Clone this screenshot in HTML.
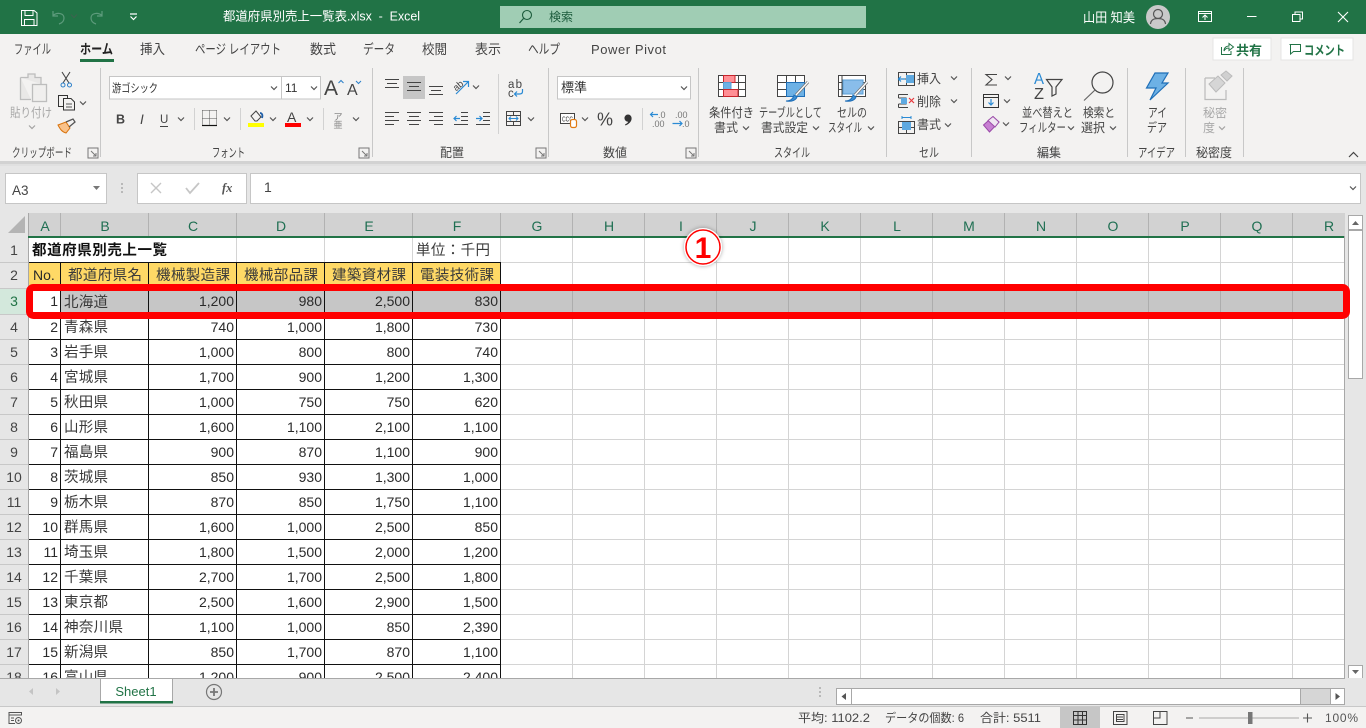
<!DOCTYPE html>
<html lang="ja"><head><meta charset="utf-8"><title>Excel</title>
<style>
html,body{margin:0;padding:0;background:#f3f2f1;overflow:hidden}
svg{display:block;font-family:"Liberation Sans","Noto Sans CJK JP",sans-serif}
.t{font-size:12.5px;fill:#444}
.c{font-size:14px;fill:#2a2a2a}
.j{font-size:14.5px;fill:#3a3a3a}
.n{text-anchor:end}
.h{font-size:14px;fill:#1f6f52;text-anchor:middle}
.r{font-size:14px;fill:#444;text-anchor:middle}
</style></head><body>
<svg xmlns="http://www.w3.org/2000/svg" width="1366" height="728" viewBox="0 0 1366 728">
<defs>
<path id="ch" d="M-3 -1.5L0 1.5L3 -1.5" fill="none" stroke="#555" stroke-width="1.2"/>
<path id="dl" d="M-5 -5H5V5H-5ZM-2 -2L3 3M3 0V3H0" fill="none" stroke="#777" stroke-width="1"/>
<filter id="gl" x="-30%" y="-30%" width="160%" height="160%"><feDropShadow dx="0" dy="0" stdDeviation="2" flood-color="#000" flood-opacity=".35"/></filter>
</defs>
<rect width="1366" height="728" fill="#f3f2f1"/>
<!-- title bar -->
<rect width="1366" height="34" fill="#217346"/>
<path d="M21.5 10.5H34L37 13V25.5H21.5ZM25 10.5V15.5H33V10.5M24.5 25.5V19.5H34V25.5" fill="none" stroke="#fff"/>
<path d="M53 11V16H58M53 15.5C57 12 64 13 64 18C64 21 62 23 59 24" fill="none" stroke="#5d9b7c" stroke-width="1.2"/>
<use href="#ch" x="74" y="16" style="opacity:.5"/>
<path d="M102 11V16H97M102 15.5C98 12 91 13 91 18C91 21 93 23 96 24" fill="none" stroke="#5d9b7c" stroke-width="1.2"/>
<path d="M130 14H137M130.5 16.5L133.5 19.5L136.5 16.5" fill="none" stroke="#fff" stroke-width="1.2"/>
<text x="223" y="20.5" font-size="12.5" fill="#fff" textLength="197" lengthAdjust="spacingAndGlyphs">都道府県別売上一覧表.xlsx&#160;&#160;-&#160;&#160;Excel</text>
<rect x="500" y="6" width="366" height="22" fill="#a0cdb4"/>
<circle cx="527" cy="15" r="4.5" fill="none" stroke="#1d5c3d" stroke-width="1.1"/><path d="M523.5 18.5L519.5 23" stroke="#1d5c3d" stroke-width="1.2"/>
<text x="549" y="21" font-size="12" fill="#1d5c3d">検索</text>
<text x="1083" y="22" font-size="13" fill="#fff" textLength="52" lengthAdjust="spacingAndGlyphs">山田 知美</text>
<circle cx="1158" cy="17" r="12" fill="#c9c9c9"/><circle cx="1158" cy="14" r="4.5" fill="none" stroke="#555" stroke-width="1.2"/><path d="M1150.5 24C1151 19.5 1154 18.5 1158 18.5S1165 19.5 1165.5 24" fill="none" stroke="#555" stroke-width="1.2"/>
<path d="M1198.5 11.5H1211.5V21.5H1198.5ZM1198.5 13.5H1211.5M1205 20V15.5M1202.5 17.5L1205 15L1207.5 17.5" fill="none" stroke="#fff"/>
<path d="M1247 16.5H1256.5" stroke="#fff"/>
<path d="M1292.5 14.5H1300V21.5H1292.5ZM1295 14.5V12H1302.5V19H1300" fill="none" stroke="#fff"/>
<path d="M1338 12L1348 22M1348 12L1338 22" stroke="#fff" stroke-width="1.1"/>
<!-- tabs -->
<g font-size="13.5" fill="#444">
<text x="14" y="54" textLength="37" lengthAdjust="spacingAndGlyphs">ファイル</text>
<text x="80" y="54" font-weight="700" fill="#222" textLength="33" lengthAdjust="spacingAndGlyphs">ホーム</text>
<text x="140" y="54" textLength="25" lengthAdjust="spacingAndGlyphs">挿入</text>
<text x="195" y="54" textLength="86" lengthAdjust="spacingAndGlyphs">ページ レイアウト</text>
<text x="310" y="54" textLength="26" lengthAdjust="spacingAndGlyphs">数式</text>
<text x="363" y="54" textLength="32" lengthAdjust="spacingAndGlyphs">データ</text>
<text x="422" y="54" textLength="25" lengthAdjust="spacingAndGlyphs">校閲</text>
<text x="475" y="54" textLength="26" lengthAdjust="spacingAndGlyphs">表示</text>
<text x="528" y="54" textLength="32" lengthAdjust="spacingAndGlyphs">ヘルプ</text>
<text x="591" y="54" font-size="13" textLength="75">Power Pivot</text>
</g>
<rect x="80" y="59" width="34" height="3" fill="#217346"/>
<rect x="1213" y="38" width="58" height="22" fill="#fff" stroke="#e4e4e4"/>
<path d="M1221.500 47V54.500H1231V51M1224 51C1224 47.500 1226.500 46 1229 46V43.500L1233.500 47L1229 50.500V48C1227 48 1225 49 1224 51Z" fill="none" stroke="#217346"/>
<text x="1236" y="55" font-size="13" font-weight="700" fill="#217346">共有</text>
<rect x="1281" y="38" width="72" height="22" fill="#fff" stroke="#e4e4e4"/>
<path d="M1289.5 44.5H1300.5V51.5H1293.5L1290.5 54V44.5Z" fill="none" stroke="#217346"/>
<text x="1304" y="55" font-size="13" font-weight="700" fill="#217346" textLength="41" lengthAdjust="spacingAndGlyphs">コメント</text>
<!-- ribbon shadow and formula area -->
<rect y="161" width="1366" height="517" fill="#e6e6e6"/>
<rect y="161" width="1366" height="3" fill="#d2d2d2"/>
<rect y="164" width="1366" height="2" fill="#e0e0e0"/>
<!-- separators -->
<g stroke="#c8c8c8"><path d="M100.5 68V157M372.5 68V157M548.5 68V157M698.5 68V157M886.5 68V157M971.5 68V157M1127.5 68V157M1185.5 68V157M1243.5 68V157"/></g>
<path d="M194.5 108V130M240.5 108V130M323.5 108V130M498.5 74V134M642.5 108V130" stroke="#d2d2d2"/>
<!-- group labels -->
<g>
<text class="t" x="12" y="157" textLength="60" lengthAdjust="spacingAndGlyphs">クリップボード</text>
<text class="t" x="212" y="157" textLength="33" lengthAdjust="spacingAndGlyphs">フォント</text>
<text class="t" x="440" y="157" textLength="24" lengthAdjust="spacingAndGlyphs">配置</text>
<text class="t" x="603" y="157" textLength="24" lengthAdjust="spacingAndGlyphs">数値</text>
<text class="t" x="774" y="157" textLength="36" lengthAdjust="spacingAndGlyphs">スタイル</text>
<text class="t" x="919" y="157" textLength="20" lengthAdjust="spacingAndGlyphs">セル</text>
<text class="t" x="1037" y="157" textLength="24" lengthAdjust="spacingAndGlyphs">編集</text>
<text class="t" x="1138" y="157" textLength="37" lengthAdjust="spacingAndGlyphs">アイデア</text>
<text class="t" x="1196" y="157" textLength="36" lengthAdjust="spacingAndGlyphs">秘密度</text>
</g>
<use href="#dl" x="93" y="153"/><use href="#dl" x="364" y="153"/><use href="#dl" x="541" y="153"/><use href="#dl" x="691" y="153"/>
<path d="M1349 157L1353.5 152.5L1358 157" fill="none" stroke="#444" stroke-width="1.2"/>
<!-- clipboard -->
<path d="M20.5 77.5H28V74H35V77.5H41V84M20.5 77.5V99.5H31" fill="#e9e8e7" stroke="#bdbdbd" stroke-width="1.3"/>
<rect x="32.5" y="84.5" width="14" height="17" fill="#f0efee" stroke="#bdbdbd" stroke-width="1.3"/>
<text x="10" y="117" font-size="12.5" fill="#a8a8a8" textLength="42" lengthAdjust="spacingAndGlyphs">貼り付け</text>
<use href="#ch" x="32" y="127" style="opacity:.5"/>
<path d="M62 72L69 83M70 72L63 83" stroke="#444" stroke-width="1.1"/><circle cx="63" cy="85" r="2" fill="none" stroke="#2a7fc9"/><circle cx="69.5" cy="85" r="2" fill="none" stroke="#2a7fc9"/>
<path d="M63 106.5H58.5V95.5H67.5V98M63.5 98.5H71L74.5 102V110H63.5Z" fill="#f3f2f1" stroke="#333"/><path d="M66 104H72M66 107H72" stroke="#555"/>
<use href="#ch" x="83" y="103"/>
<path d="M58 125L66 122L70 128L66 133C62 132 60 129 58 125Z" fill="#f9c28a" stroke="#d9730d"/><path d="M66 122L73 119L75 122L69 127" fill="none" stroke="#555" stroke-width="1.3"/>
<!-- font -->
<rect x="109.5" y="76.5" width="172" height="22.5" fill="#fff" stroke="#c6c6c6"/>
<rect x="281.5" y="76.5" width="39" height="22.5" fill="#fff" stroke="#c6c6c6"/>
<text x="112" y="92" font-size="11.5" fill="#333" textLength="46" lengthAdjust="spacingAndGlyphs">游ゴシック</text>
<text x="285" y="92" font-size="12" fill="#333">11</text>
<use href="#ch" x="274" y="88"/><use href="#ch" x="314" y="88"/>
<text x="324" y="95" font-size="21" fill="#444">A</text>
<path d="M338.5 83L341 80.5L343.5 83" fill="none" stroke="#2a7fc9"/>
<text x="347" y="95" font-size="16" fill="#444">A</text>
<path d="M356 81L358.5 83.5L361 81" fill="none" stroke="#2a7fc9"/>
<text x="116" y="123.500" font-size="12.500" font-weight="700" fill="#444">B</text>
<text x="140" y="124" font-size="13.500" font-style="italic" fill="#444">I</text>
<text x="160" y="123" font-size="11.500" fill="#444">U</text><path d="M160 126.500H168" stroke="#444"/>
<use href="#ch" x="181" y="119"/>
<path d="M202.5 110.5H217M202.5 118.5H217M209.5 110.5V125M202.5 110.5V125M216.5 110.5V125" fill="none" stroke="#555" stroke-dasharray="1 1"/><path d="M202 125.5H217" stroke="#111" stroke-width="1.2"/>
<use href="#ch" x="227" y="119"/>
<path d="M251 116L256 111L261 117L257 121H255Z" fill="none" stroke="#444"/><path d="M260 113C262 113 263 115 262 118" fill="none" stroke="#1f5fa8" stroke-width="1.8"/>
<rect x="248" y="123" width="16" height="4" fill="#ff0"/>
<use href="#ch" x="273" y="119"/>
<text x="287" y="122" font-size="14" fill="#444">A</text>
<rect x="285" y="123" width="16" height="4" fill="#f00"/>
<use href="#ch" x="310" y="119"/>
<text x="333.5" y="120" font-size="9" fill="#777">ア</text>
<text x="333.5" y="128" font-size="9" fill="#888">亜</text>
<use href="#ch" x="356" y="119"/>
<!-- alignment -->
<rect x="403" y="76" width="22" height="23" fill="#c6c6c6"/>
<g stroke="#444" fill="none">
<path d="M385 79.5H399M387 83.5H397M385 87.5H399"/>
<path d="M407 82.5H421M409 86.5H419M407 90.5H421"/>
<path d="M429 86.5H443M431 90.5H441M429 94.5H443"/>
<path d="M385 112.5H399M385 116.5H394M385 120.5H399M385 124.5H394"/>
<path d="M407 112.5H421M409 116.5H419M407 120.5H421M409 124.5H419"/>
<path d="M429 112.5H443M434 116.5H443M429 120.5H443M434 124.5H443"/>
<path d="M461 112.5H468M461 116.5H468M461 120.5H468M454 124.5H468"/>
<path d="M483 112.5H490M483 116.5H490M483 120.5H490M476 124.5H490"/>
</g>
<path d="M460 118.5H454M456.5 116L454 118.5L456.5 121" fill="none" stroke="#2a8ad4" stroke-width="1.2"/>
<path d="M476 118.5H482M479.5 116L482 118.5L479.5 121" fill="none" stroke="#2a8ad4" stroke-width="1.2"/>
<text x="453" y="89" font-size="9.5" fill="#444" transform="rotate(-40 458 86)">ab</text>
<path d="M456 94L468 82M463 81.5H468.5V87" fill="none" stroke="#2a8ad4" stroke-width="1.2"/>
<use href="#ch" x="476" y="87"/>
<text x="508" y="88" font-size="11.5" fill="#444" textLength="14">ab</text><text x="508" y="97" font-size="11.5" fill="#444">c</text>
<path d="M522.5 89V91.5C522.5 93 521.5 94 519.5 94H515M517 91.5L514.5 94L517 96.5" fill="none" stroke="#2a8ad4" stroke-width="1.2"/>
<path d="M506.5 111.5H520.5V125.5H506.5ZM506.5 115.5H520.5M506.5 121.5H520.5M513.5 111.5V115.5M513.5 121.5V125.5" fill="none" stroke="#444"/>
<path d="M509 118.5H518M511 116.5L509 118.5L511 120.5M516 116.5L518 118.5L516 120.5" fill="none" stroke="#2a8ad4"/>
<use href="#ch" x="531" y="119"/>
<!-- number -->
<rect x="557.5" y="76.5" width="133" height="22.5" fill="#fff" stroke="#c6c6c6"/>
<text x="561" y="92" font-size="13" fill="#333">標準</text>
<use href="#ch" x="684" y="88"/>
<rect x="560.5" y="113.5" width="14" height="10" fill="#fff" stroke="#444"/>
<text x="562" y="121.5" font-size="7" fill="#333" textLength="11" lengthAdjust="spacingAndGlyphs">CCC</text>
<rect x="570.5" y="119.5" width="6" height="8" rx="2" fill="#fff" stroke="#e07b14" stroke-width="1.2"/>
<use href="#ch" x="585" y="119"/>
<text x="597" y="125.5" font-size="18" fill="#444">%</text>
<path d="M628 114.500A3.600 3.600 0 0 1 631.600 118.500C631.600 121.500 629 124 625.500 125.500L625 124.500C627 123.500 628 122.500 628.200 121.800A3.500 3.500 0 0 1 628 114.500Z" fill="#333"/>
<text x="658" y="118" font-size="9" fill="#777">.0</text><text x="652" y="127" font-size="9" fill="#777">.00</text>
<path d="M658 114.500H650.500M653 112L650.500 114.500L653 117" fill="none" stroke="#2a8ad4" stroke-width="1.200"/>
<text x="675" y="118" font-size="9" fill="#777">.00</text><text x="682" y="127" font-size="9" fill="#777">.0</text>
<path d="M672.500 123.500H682M679.500 121L682 123.500L679.500 126" fill="none" stroke="#2a8ad4" stroke-width="1.200"/>
<!-- styles icons -->
<path d="M718.5 75.500H745.500V96.500H718.500ZM718.500 82.500H745.500M718.500 89.500H745.500M723.500 75.500V96.500M731 75.500V96.500M738.500 75.500V96.500" fill="#fff" stroke="#444"/>
<rect x="723.5" y="75.5" width="11.500" height="7" fill="#ff8f95" stroke="#c8242b"/><rect x="723.5" y="82.5" width="7.500" height="7" fill="#6db1e5" stroke="#5a9ed4"/><rect x="723.5" y="89.5" width="14.500" height="7" fill="#ff8f95" stroke="#c8242b"/>
<path d="M777.5 75.5H804.5V96.5H777.5ZM777.5 82.5H804.5M777.5 89.5H804.5M786.5 75.5V96.5M795.5 75.5V96.5" fill="#fff" stroke="#444"/>
<rect x="786.5" y="82.5" width="18" height="14" fill="#6db1e5" stroke="#1f6fb8"/>
<path d="M808 82L796 95" stroke="#777" stroke-width="3"/><path d="M808 82L796 95" stroke="#fff" stroke-width="1.3"/><path d="M786 101C790 101 793 99 794 95L797 97C796 100 792 102 786 101Z" fill="#3d8fd4" stroke="#1f6fb8"/>
<path d="M838.5 75.5H865.5V96.5H838.5ZM838.5 82.5H865.5M838.5 89.5H865.5M842 75.5V96.5" fill="#fff" stroke="#444"/>
<rect x="843" y="80" width="20" height="14" fill="#89bdea" stroke="#5a9ed4"/>
<path d="M867 82L855 95" stroke="#777" stroke-width="3"/><path d="M867 82L855 95" stroke="#fff" stroke-width="1.3"/><path d="M845 101C849 101 852 99 853 95L856 97C855 100 851 102 845 101Z" fill="#3d8fd4" stroke="#1f6fb8"/>
<g>
<text class="t" x="709" y="117" textLength="45" lengthAdjust="spacingAndGlyphs">条件付き</text>
<text class="t" x="714" y="132" textLength="24" lengthAdjust="spacingAndGlyphs">書式</text>
<text class="t" x="759" y="117" textLength="63" lengthAdjust="spacingAndGlyphs">テーブルとして</text>
<text class="t" x="761" y="132" textLength="47" lengthAdjust="spacingAndGlyphs">書式設定</text>
<text class="t" x="837" y="117" textLength="30" lengthAdjust="spacingAndGlyphs">セルの</text>
<text class="t" x="828" y="132" textLength="34" lengthAdjust="spacingAndGlyphs">スタイル</text>
</g>
<use href="#ch" x="746" y="128"/><use href="#ch" x="816" y="128"/><use href="#ch" x="871" y="128"/>
<!-- cells -->
<path d="M898.5 72.5H914.5V85.5H898.5ZM898.5 79H914.5M906.5 72.5V85.5" fill="none" stroke="#444"/><rect x="906" y="75" width="8" height="8" fill="#5fa9e0"/>
<path d="M905 79H899M901 76.5L898.5 79L901 81.5" fill="none" stroke="#2a8ad4" stroke-width="1.2"/>
<path d="M898.5 94.5H908M898.5 107.5H908M898.5 94.5V98M898.5 104V107.5M906.5 98V104M898.5 98H906.5M898.5 104H906.5" fill="none" stroke="#444"/><rect x="901" y="98" width="6" height="6" fill="#5fa9e0"/><path d="M909 98L914 103M914 98L909 103" stroke="#e8383d" stroke-width="1.2"/>
<path d="M898.5 121.5H914.5V133.5H898.5ZM898.5 127.5H914.5M906.5 121.5V133.5" fill="none" stroke="#444"/><rect x="902" y="122" width="9" height="8" fill="#5fa9e0"/><path d="M902 117.5H911M902 116V119M911 116V119" stroke="#2a8ad4"/>
<text class="t" x="917" y="83" textLength="24" lengthAdjust="spacingAndGlyphs">挿入</text>
<text class="t" x="917" y="106" textLength="24" lengthAdjust="spacingAndGlyphs">削除</text>
<text class="t" x="917" y="129" textLength="24" lengthAdjust="spacingAndGlyphs">書式</text>
<use href="#ch" x="954" y="78"/><use href="#ch" x="954" y="101"/><use href="#ch" x="948" y="125"/>
<!-- edit -->
<path d="M997 74.5H986L992 79.5L986 85H997" fill="none" stroke="#444" stroke-width="1.1"/>
<use href="#ch" x="1008" y="78"/>
<path d="M983.5 94.5H998.5V107.5H983.5ZM983.5 97.5H998.5" fill="none" stroke="#333"/><path d="M991 99V105M988.5 102.5L991 105L993.5 102.5" fill="none" stroke="#2a8ad4" stroke-width="1.2"/>
<use href="#ch" x="1007" y="101"/>
<path d="M983.5 125L993 116.5L999 122L989.5 132Z" fill="#c77fd2" stroke="#9a4aa8"/><path d="M988 120.5L995 127L999 122L993 116.5Z" fill="#f0e6f2" stroke="#9a4aa8"/>
<use href="#ch" x="1006" y="124"/>
<text x="1034" y="84" font-size="16" fill="#2a8ad4" textLength="10" lengthAdjust="spacingAndGlyphs">A</text>
<text x="1034" y="99" font-size="16" fill="#444" textLength="10" lengthAdjust="spacingAndGlyphs">Z</text>
<path d="M1046.5 79.5H1062L1056 87V94L1052 96V87Z" fill="none" stroke="#444" stroke-width="1.2"/>
<circle cx="1102.5" cy="82.5" r="10.5" fill="none" stroke="#444" stroke-width="1.2"/><path d="M1095 90L1084 100.5" stroke="#666" stroke-width="1.2"/>
<g>
<text class="t" x="1022" y="117" textLength="51" lengthAdjust="spacingAndGlyphs">並べ替えと</text>
<text class="t" x="1019" y="132" textLength="47" lengthAdjust="spacingAndGlyphs">フィルター</text>
<text class="t" x="1083" y="117" textLength="32" lengthAdjust="spacingAndGlyphs">検索と</text>
<text class="t" x="1081" y="132" textLength="24" lengthAdjust="spacingAndGlyphs">選択</text>
</g>
<use href="#ch" x="1071" y="128"/><use href="#ch" x="1113" y="128"/>
<!-- ideas -->
<path d="M1155 73H1168L1162 83H1168L1150 100L1156 88H1146.5Z" fill="#6db1e5" stroke="#1f6fb8" stroke-width="1.2"/>
<text class="t" x="1148" y="117" textLength="19" lengthAdjust="spacingAndGlyphs">アイ</text>
<text class="t" x="1147" y="132" textLength="20" lengthAdjust="spacingAndGlyphs">デア</text>
<!-- sensitivity -->
<path d="M1205 78H1215M1205 78V99.5H1226V90" fill="none" stroke="#bbb" stroke-width="1.2"/>
<path d="M1209 84L1218 76L1225 83L1216 92Z" fill="#d6d6d6" stroke="#bbb"/><path d="M1221 75L1226 71L1232 76L1227 81Z" fill="#d0d0d0" stroke="#bbb"/>
<text x="1203" y="117" font-size="12" fill="#a8a8a8">秘密</text>
<text x="1203" y="132" font-size="12" fill="#a8a8a8">度</text>
<use href="#ch" x="1222" y="128" style="opacity:.5"/>
<!-- formula bar -->
<rect x="5.5" y="173.5" width="101" height="30" fill="#fff" stroke="#c6c6c6"/>
<text x="12" y="195" font-size="13.5" fill="#444">A3</text>
<path d="M93 186H100L96.5 190Z" fill="#777"/>
<path d="M122 183V185M122 187V189M122 191V193" stroke="#aaa" stroke-width="1.5"/>
<rect x="137.5" y="173.5" width="109" height="30" fill="#fff" stroke="#c6c6c6"/>
<path d="M151 183L161 193M161 183L151 193" stroke="#c6c6c6" stroke-width="1.4"/>
<path d="M186 188L190 193L199 183" fill="none" stroke="#c6c6c6" stroke-width="1.8"/>
<text x="222" y="192" font-size="12.5" font-style="italic" font-weight="700" font-family="Liberation Serif" fill="#555">fx</text>
<rect x="250.5" y="173.5" width="1110" height="30" fill="#fff" stroke="#c6c6c6"/>
<text x="264" y="192" font-size="14" fill="#444">1</text>
<use href="#ch" x="1353" y="188"/>
<!-- column headers -->
<rect x="0" y="213" width="1345" height="25" fill="#e6e6e6"/>
<rect x="29" y="213" width="1316" height="24" fill="#d2d2d2"/>
<path d="M25 216V233H8Z" fill="#b4b4b4"/>
<path d="M28.5 213V238" stroke="#a8a8a8"/>
<path d="M60.5 213V236M148.5 213V236M236.5 213V236M324.5 213V236M412.5 213V236M500.5 213V236M572.5 213V236M644.5 213V236M716.5 213V236M788.5 213V236M860.5 213V236M932.5 213V236M1004.5 213V236M1076.5 213V236M1148.5 213V236M1220.5 213V236M1292.5 213V236" stroke="#b2b2b2"/>
<g>
<text class="h" x="45" y="231">A</text><text class="h" x="105" y="231">B</text><text class="h" x="193" y="231">C</text><text class="h" x="281" y="231">D</text><text class="h" x="369" y="231">E</text><text class="h" x="457" y="231">F</text><text class="h" x="537" y="231">G</text><text class="h" x="609" y="231">H</text><text class="h" x="681" y="231">I</text><text class="h" x="753" y="231">J</text><text class="h" x="825" y="231">K</text><text class="h" x="897" y="231">L</text><text class="h" x="969" y="231">M</text><text class="h" x="1041" y="231">N</text><text class="h" x="1113" y="231">O</text><text class="h" x="1185" y="231">P</text><text class="h" x="1257" y="231">Q</text><text class="h" x="1329" y="231">R</text>
</g>
<rect x="28" y="236" width="1317" height="2" fill="#217346"/>
<!-- grid -->
<rect x="29" y="238" width="1315" height="440" fill="#fff"/>
<rect x="61" y="289" width="1283" height="26" fill="#c6c6c6"/>
<rect x="29" y="263" width="472" height="26" fill="#ffd966"/>
<g stroke="#d4d4d4">
<path d="M501 288.5H1344M29 314.5H1344M501 339.5H1344M501 364.5H1344M501 389.5H1344M501 414.5H1344M501 439.5H1344M501 464.5H1344M501 489.5H1344M501 514.5H1344M501 539.5H1344M501 564.5H1344M501 589.5H1344M501 614.5H1344M501 639.5H1344M501 664.5H1344M501 262.5H1344"/>
<path d="M236.5 238V262M324.5 238V262M412.5 238V262M500.5 238V262M572.5 238V678M644.5 238V678M716.5 238V678M788.5 238V678M860.5 238V678M932.5 238V678M1004.5 238V678M1076.5 238V678M1148.5 238V678M1220.5 238V678M1292.5 238V678"/>
</g>
<path d="M572.5 289V315M644.5 289V315M716.5 289V315M788.5 289V315M860.5 289V315M932.5 289V315M1004.5 289V315M1076.5 289V315M1148.5 289V315M1220.5 289V315M1292.5 289V315" stroke="#adadad"/>
<g stroke="#111">
<path d="M29 262.5H501M29 288.5H501M29 314.5H501M29 339.5H501M29 364.5H501M29 389.5H501M29 414.5H501M29 439.5H501M29 464.5H501M29 489.5H501M29 514.5H501M29 539.5H501M29 564.5H501M29 589.5H501M29 614.5H501M29 639.5H501M29 664.5H501"/>
<path d="M60.5 262V678M148.5 262V678M236.5 262V678M324.5 262V678M412.5 262V678M500.5 262V678"/>
</g>
<path d="M1344.5 236V678" stroke="#a8a8a8"/>
<!-- row headers -->
<rect x="0" y="238" width="28" height="440" fill="#e6e6e6"/>
<rect x="0" y="289" width="28" height="26" fill="#d3e8dc"/>
<path d="M28.5 238V678" stroke="#a8a8a8"/>
<path d="M0 262.5H28M0 288.5H28M0 314.5H28M0 339.5H28M0 364.5H28M0 389.5H28M0 414.5H28M0 439.5H28M0 464.5H28M0 489.5H28M0 514.5H28M0 539.5H28M0 564.5H28M0 589.5H28M0 614.5H28M0 639.5H28M0 664.5H28" stroke="#c8c8c8"/>
<g>
<text class="r" x="14" y="255">1</text><text class="r" x="14" y="280">2</text><text class="r" x="14" y="306" style="fill:#217346">3</text><text class="r" x="14" y="332">4</text><text class="r" x="14" y="357">5</text><text class="r" x="14" y="382">6</text><text class="r" x="14" y="407">7</text><text class="r" x="14" y="432">8</text><text class="r" x="14" y="457">9</text><text class="r" x="14" y="482">10</text><text class="r" x="14" y="507">11</text><text class="r" x="14" y="532">12</text><text class="r" x="14" y="557">13</text><text class="r" x="14" y="582">14</text><text class="r" x="14" y="607">15</text><text class="r" x="14" y="632">16</text><text class="r" x="14" y="657">17</text><text class="r" x="14" y="682">18</text>
</g>
<!-- table text -->
<text x="32" y="255" font-size="14.5" font-weight="700" fill="#111" textLength="135">都道府県別売上一覧</text>
<text x="416" y="255" class="j" textLength="74">単位：千円</text>
<text x="33" y="280" class="c">No.</text>
<text x="68" y="280" class="j" textLength="74">都道府県名</text>
<text x="156" y="280" class="j" textLength="74">機械製造課</text>
<text x="244" y="280" class="j" textLength="74">機械部品課</text>
<text x="332" y="280" class="j" textLength="74">建築資材課</text>
<text x="420" y="280" class="j" textLength="74">電装技術課</text>
<g>
<text class="j" x="64" y="307" textLength="44">北海道</text>
<text class="j" x="64" y="332" textLength="44">青森県</text>
<text class="j" x="64" y="357" textLength="44">岩手県</text>
<text class="j" x="64" y="382" textLength="44">宮城県</text>
<text class="j" x="64" y="407" textLength="44">秋田県</text>
<text class="j" x="64" y="432" textLength="44">山形県</text>
<text class="j" x="64" y="457" textLength="44">福島県</text>
<text class="j" x="64" y="482" textLength="44">茨城県</text>
<text class="j" x="64" y="507" textLength="44">栃木県</text>
<text class="j" x="64" y="532" textLength="44">群馬県</text>
<text class="j" x="64" y="557" textLength="44">埼玉県</text>
<text class="j" x="64" y="582" textLength="44">千葉県</text>
<text class="j" x="64" y="607" textLength="44">東京都</text>
<text class="j" x="64" y="632" textLength="59">神奈川県</text>
<text class="j" x="64" y="657" textLength="44">新潟県</text>
<text class="j" x="64" y="682" textLength="44">富山県</text>
</g>
<g text-anchor="end">
<text class="c n" x="58" y="306">1</text><text class="c n" x="234" y="306">1,200</text><text class="c n" x="322" y="306">980</text><text class="c n" x="410" y="306">2,500</text><text class="c n" x="498" y="306">830</text>
<text class="c n" x="58" y="332">2</text><text class="c n" x="234" y="332">740</text><text class="c n" x="322" y="332">1,000</text><text class="c n" x="410" y="332">1,800</text><text class="c n" x="498" y="332">730</text>
<text class="c n" x="58" y="357">3</text><text class="c n" x="234" y="357">1,000</text><text class="c n" x="322" y="357">800</text><text class="c n" x="410" y="357">800</text><text class="c n" x="498" y="357">740</text>
<text class="c n" x="58" y="382">4</text><text class="c n" x="234" y="382">1,700</text><text class="c n" x="322" y="382">900</text><text class="c n" x="410" y="382">1,200</text><text class="c n" x="498" y="382">1,300</text>
<text class="c n" x="58" y="407">5</text><text class="c n" x="234" y="407">1,000</text><text class="c n" x="322" y="407">750</text><text class="c n" x="410" y="407">750</text><text class="c n" x="498" y="407">620</text>
<text class="c n" x="58" y="432">6</text><text class="c n" x="234" y="432">1,600</text><text class="c n" x="322" y="432">1,100</text><text class="c n" x="410" y="432">2,100</text><text class="c n" x="498" y="432">1,100</text>
<text class="c n" x="58" y="457">7</text><text class="c n" x="234" y="457">900</text><text class="c n" x="322" y="457">870</text><text class="c n" x="410" y="457">1,100</text><text class="c n" x="498" y="457">900</text>
<text class="c n" x="58" y="482">8</text><text class="c n" x="234" y="482">850</text><text class="c n" x="322" y="482">930</text><text class="c n" x="410" y="482">1,300</text><text class="c n" x="498" y="482">1,000</text>
<text class="c n" x="58" y="507">9</text><text class="c n" x="234" y="507">870</text><text class="c n" x="322" y="507">850</text><text class="c n" x="410" y="507">1,750</text><text class="c n" x="498" y="507">1,100</text>
<text class="c n" x="58" y="532">10</text><text class="c n" x="234" y="532">1,600</text><text class="c n" x="322" y="532">1,000</text><text class="c n" x="410" y="532">2,500</text><text class="c n" x="498" y="532">850</text>
<text class="c n" x="58" y="557">11</text><text class="c n" x="234" y="557">1,800</text><text class="c n" x="322" y="557">1,500</text><text class="c n" x="410" y="557">2,000</text><text class="c n" x="498" y="557">1,200</text>
<text class="c n" x="58" y="582">12</text><text class="c n" x="234" y="582">2,700</text><text class="c n" x="322" y="582">1,700</text><text class="c n" x="410" y="582">2,500</text><text class="c n" x="498" y="582">1,800</text>
<text class="c n" x="58" y="607">13</text><text class="c n" x="234" y="607">2,500</text><text class="c n" x="322" y="607">1,600</text><text class="c n" x="410" y="607">2,900</text><text class="c n" x="498" y="607">1,500</text>
<text class="c n" x="58" y="632">14</text><text class="c n" x="234" y="632">1,100</text><text class="c n" x="322" y="632">1,000</text><text class="c n" x="410" y="632">850</text><text class="c n" x="498" y="632">2,390</text>
<text class="c n" x="58" y="657">15</text><text class="c n" x="234" y="657">850</text><text class="c n" x="322" y="657">1,700</text><text class="c n" x="410" y="657">870</text><text class="c n" x="498" y="657">1,100</text>
<text class="c n" x="58" y="682">16</text><text class="c n" x="234" y="682">1,200</text><text class="c n" x="322" y="682">900</text><text class="c n" x="410" y="682">2,500</text><text class="c n" x="498" y="682">2,400</text>
</g>
<!-- vertical scrollbar -->
<rect x="1345" y="213" width="21" height="465" fill="#e6e6e6"/>
<rect x="1348.5" y="215.5" width="14" height="14" fill="#fff" stroke="#a8a8a8"/>
<path d="M1352 225H1359L1355.5 221Z" fill="#666"/>
<rect x="1348.5" y="230.5" width="14" height="148" fill="#fff" stroke="#a8a8a8"/>
<rect x="1348.5" y="665.5" width="14" height="14" fill="#fff" stroke="#a8a8a8"/>
<path d="M1352 670H1359L1355.5 674Z" fill="#666"/>
<!-- annotation -->
<rect x="29.5" y="287.5" width="1317" height="28" rx="4" fill="none" stroke="#f00" stroke-width="7"/>
<circle cx="703" cy="247" r="19" fill="#fff" filter="url(#gl)"/>
<circle cx="703" cy="247" r="17" fill="none" stroke="#f00" stroke-width="1.5"/>
<text x="703" y="258" font-size="30" font-weight="700" fill="#f00" text-anchor="middle">1</text>
<!-- sheet tabs -->
<rect y="678" width="1366" height="29" fill="#e6e6e6"/>
<path d="M0 678.5H1345" stroke="#a8a8a8"/>
<path d="M33 688V695L29 691.5Z" fill="#c4c4c4"/>
<path d="M56 688V695L60 691.5Z" fill="#c4c4c4"/>
<path d="M100.5 702V678.5H172.5V702" fill="#fff" stroke="#a8a8a8"/>
<rect x="100" y="701" width="73" height="2.5" fill="#217346"/>
<text x="136" y="696" font-size="13" fill="#217346" text-anchor="middle">Sheet1</text>
<circle cx="214" cy="692" r="7.5" fill="none" stroke="#777" stroke-width="1.2"/>
<path d="M214 688V696M210 692H218" stroke="#777" stroke-width="1.8"/>
<path d="M820 687V689M820 691V693M820 695V697" stroke="#aaa" stroke-width="1.5"/>
<rect x="836.5" y="688.5" width="508" height="16" fill="#d6d6d6" stroke="#a8a8a8"/>
<rect x="836.5" y="688.5" width="15" height="16" fill="#fff" stroke="#a8a8a8"/>
<rect x="851.5" y="688.5" width="449" height="16" fill="#fff" stroke="#a8a8a8"/>
<rect x="1330.5" y="688.5" width="14" height="16" fill="#fff" stroke="#a8a8a8"/>
<path d="M846 693V700L841.5 696.5Z" fill="#555"/>
<path d="M1335.5 693V700L1340 696.5Z" fill="#555"/>
<!-- status bar -->
<rect y="707" width="1366" height="21" fill="#f3f2f1"/>
<path d="M0 706.5H1366" stroke="#c8c8c8"/>
<path d="M9 712.5H21.5V715H9ZM9 715V723.5H15M11 718H14M11 720.5H14" fill="none" stroke="#555"/><circle cx="18.5" cy="720.5" r="3" fill="none" stroke="#555"/><circle cx="18.5" cy="720.5" r="1" fill="#555"/>
<text x="798" y="722" font-size="12" fill="#444" textLength="72" lengthAdjust="spacingAndGlyphs">平均: 1102.2</text>
<text x="885" y="722" font-size="12" fill="#444" textLength="79" lengthAdjust="spacingAndGlyphs">データの個数: 6</text>
<text x="980" y="722" font-size="12" fill="#444" textLength="61" lengthAdjust="spacingAndGlyphs">合計: 5511</text>
<rect x="1060" y="707" width="40" height="21" fill="#c6c6c6"/>
<path d="M1073.5 711.5H1086.5V724.5H1073.5ZM1073.5 715.5H1086.5M1073.5 720H1086.5M1078 711.5V724.5M1082.5 711.5V724.5" fill="none" stroke="#333"/>
<path d="M1113.5 711.5H1127V724.5H1113.5ZM1116.5 714.5H1124V721.5H1116.5ZM1117 717H1123M1117 719.5H1123" fill="none" stroke="#444"/>
<path d="M1153.5 711.5H1167V724.5H1153.5ZM1160 711.5V718H1153.5" fill="none" stroke="#444"/>
<path d="M1186 718H1193M1303 718H1312M1307.5 713.5V722.5" stroke="#555" stroke-width="1.1"/>
<path d="M1199 718H1299" stroke="#a8a8a8"/>
<rect x="1248" y="712" width="4.5" height="12" fill="#777"/>
<text x="1325" y="722" font-size="12" fill="#555" textLength="33">100%</text>
</svg>
</body></html>
